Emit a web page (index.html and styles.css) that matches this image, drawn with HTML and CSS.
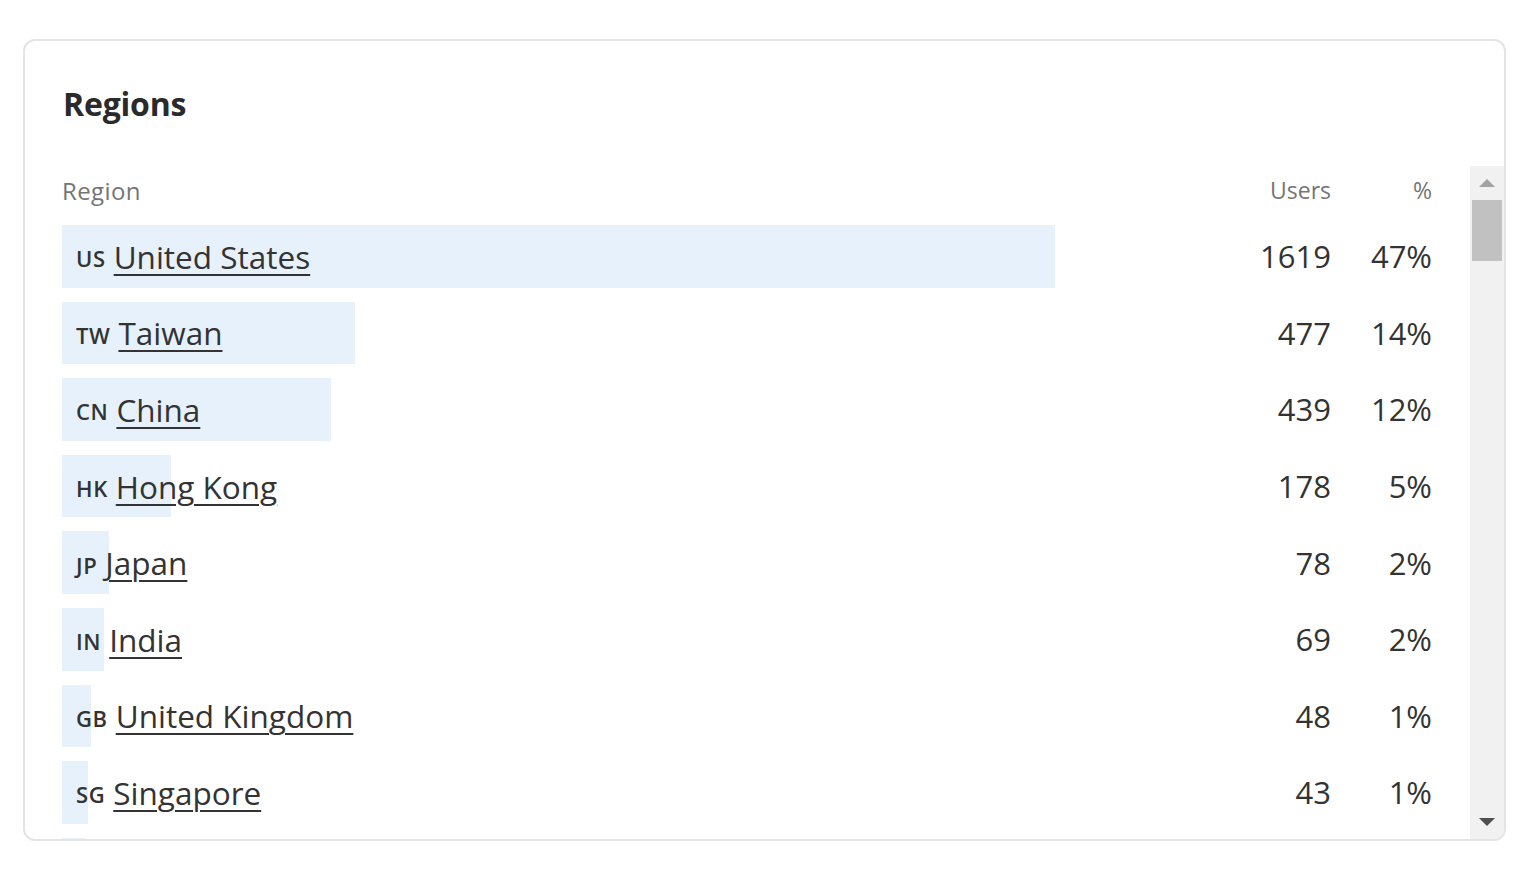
FILE: index.html
```html
<!DOCTYPE html>
<html lang="en">
<head>
<meta charset="utf-8">
<title>Regions</title>
<link rel="stylesheet" href="styles.css">
</head>
<body>
<section class="card">
  <h2 class="card-title">Regions</h2>
  <div class="table-wrap">
    <div class="table-scroll">
      <div class="table">
        <div class="row head">
          <div class="cell region-col">Region</div>
          <div class="cell num">Users</div>
          <div class="cell num">%</div>
        </div>
        <div class="row">
          <div class="cell region-col"><div class="bar" style="width:100%"><span class="code">US</span><a href="#" class="name">United States</a></div></div>
          <div class="cell num">1619</div>
          <div class="cell num">47%</div>
        </div>
        <div class="row">
          <div class="cell region-col"><div class="bar" style="width:29.46%"><span class="code">TW</span><a href="#" class="name">Taiwan</a></div></div>
          <div class="cell num">477</div>
          <div class="cell num">14%</div>
        </div>
        <div class="row">
          <div class="cell region-col"><div class="bar" style="width:27.12%"><span class="code">CN</span><a href="#" class="name">China</a></div></div>
          <div class="cell num">439</div>
          <div class="cell num">12%</div>
        </div>
        <div class="row">
          <div class="cell region-col"><div class="bar" style="width:10.99%"><span class="code">HK</span><a href="#" class="name">Hong Kong</a></div></div>
          <div class="cell num">178</div>
          <div class="cell num">5%</div>
        </div>
        <div class="row">
          <div class="cell region-col"><div class="bar" style="width:4.7%"><span class="code">JP</span><a href="#" class="name">Japan</a></div></div>
          <div class="cell num">78</div>
          <div class="cell num">2%</div>
        </div>
        <div class="row">
          <div class="cell region-col"><div class="bar" style="width:4.26%"><span class="code">IN</span><a href="#" class="name">India</a></div></div>
          <div class="cell num">69</div>
          <div class="cell num">2%</div>
        </div>
        <div class="row">
          <div class="cell region-col"><div class="bar" style="width:2.96%"><span class="code">GB</span><a href="#" class="name">United Kingdom</a></div></div>
          <div class="cell num">48</div>
          <div class="cell num">1%</div>
        </div>
        <div class="row">
          <div class="cell region-col"><div class="bar" style="width:2.66%"><span class="code">SG</span><a href="#" class="name">Singapore</a></div></div>
          <div class="cell num">43</div>
          <div class="cell num">1%</div>
        </div>
        <div class="row row-peek">
          <div class="cell region-col"><div class="bar" style="width:2.4%"></div></div>
        </div>
      </div>
    </div>
    <div class="scrollbar" aria-hidden="true">
      <div class="sb-btn sb-up"><span class="tri tri-up"></span></div>
      <div class="sb-track"><div class="sb-thumb"></div></div>
      <div class="sb-btn sb-down"><span class="tri tri-down"></span></div>
    </div>
  </div>
</section>
</body>
</html>
```
FILE: styles.css
```css
* { box-sizing: border-box; }

html, body {
  margin: 0;
  background: #ffffff;
}

body {
  padding: 39px 28px 0 23px;
  font-family: "Open Sans", "Noto Sans", sans-serif;
  color: #333333;
}

.card {
  height: 802px;
  border: 2px solid #e4e4e4;
  border-radius: 12px;
  overflow: hidden;
  display: flex;
  flex-direction: column;
}

.card-title {
  margin: 0;
  padding: 43px 0 0 38px;
  font-size: 32px;
  line-height: 40px;
  font-weight: 700;
  color: #2a2a2a;
  letter-spacing: -0.2px;
}

.table-wrap {
  margin-top: 42px;
  flex: 1;
  min-height: 0;
  display: flex;
}

.table-scroll {
  flex: 1;
  overflow: hidden;
  padding: 0 38px 0 37px;
}

.row {
  display: grid;
  grid-template-columns: 993px 1fr 101px;
  height: 76.6px;
  padding: 7px 0;
  align-items: stretch;
}

.row.head {
  height: 52px;
  padding: 0 0 4px;
  align-items: center;
  font-size: 24px;
  color: #757575;
}

.cell {
  display: flex;
  align-items: center;
  white-space: nowrap;
}

.num {
  justify-content: flex-end;
  font-size: 31px;
  color: #333333;
}

.head .num { font-size: 23px; color: #757575; }

.head .region-col { letter-spacing: 0.4px; }

.bar {
  height: 100%;
  background: #e7f1fc;
  display: flex;
  align-items: center;
  padding-left: 14px;
  font-size: 31.5px;
  white-space: nowrap;
}

.code {
  font-size: 22px;
  font-weight: 600;
  color: #333333;
  letter-spacing: 0.6px;
  padding-top: 4px;
  margin-right: 8px;
}

.name {
  color: #333333;
  text-decoration: underline;
  text-decoration-thickness: 2px;
  text-underline-offset: 5px;
}

.scrollbar {
  width: 34px;
  background: #f1f1f1;
  display: flex;
  flex-direction: column;
}

.sb-btn {
  height: 34px;
  display: flex;
  align-items: center;
  justify-content: center;
}

.sb-track {
  flex: 1;
  padding: 0 2px;
}

.sb-thumb {
  height: 61px;
  background: #c1c1c1;
}

.tri {
  width: 0;
  height: 0;
  border-left: 8px solid transparent;
  border-right: 8px solid transparent;
}

.tri-up {
  border-bottom: 8px solid #a3a3a3;
}

.tri-down {
  border-top: 8px solid #505050;
}
```
